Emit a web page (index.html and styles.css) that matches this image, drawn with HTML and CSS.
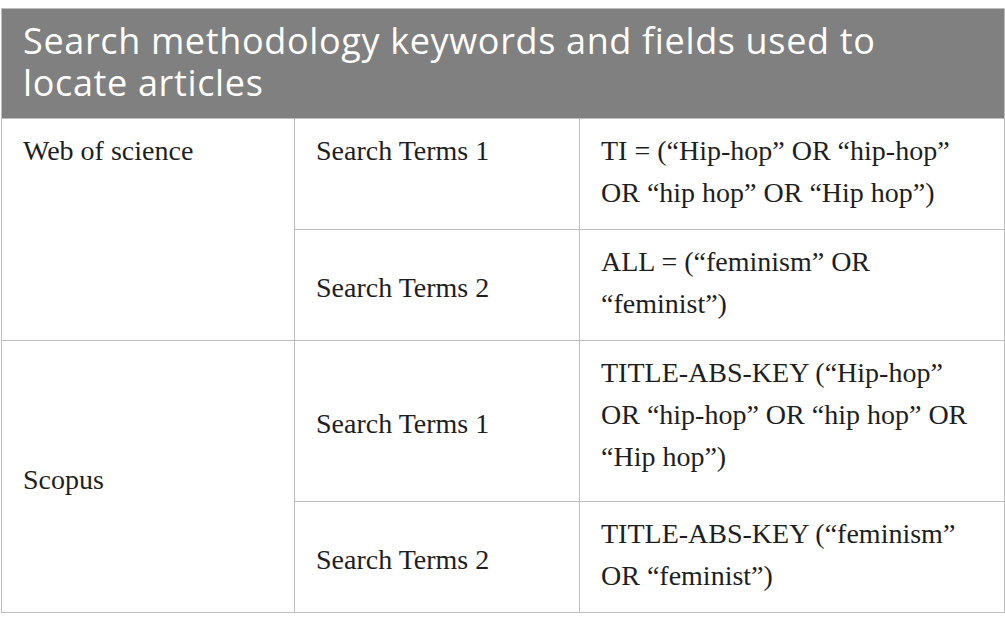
FILE: index.html
```html
<!DOCTYPE html>
<html lang="en">
<head>
<meta charset="utf-8">
<title>Search methodology</title>
<link rel="stylesheet" href="styles.css">
</head>
<body>
<table class="tbl">
  <caption class="cap">Search methodology keywords and fields used to locate articles</caption>
  <colgroup>
    <col class="c1">
    <col class="c2">
    <col class="c3">
  </colgroup>
  <tbody>
    <tr>
      <td rowspan="2" class="top">Web of science</td>
      <td class="top">Search Terms 1</td>
      <td class="q">TI = (“Hip-hop” OR “hip-hop” OR “hip hop” OR “Hip hop”)</td>
    </tr>
    <tr>
      <td>Search Terms 2</td>
      <td class="q">ALL = (“feminism” OR “feminist”)</td>
    </tr>
    <tr>
      <td rowspan="2">Scopus</td>
      <td>Search Terms 1</td>
      <td class="q extra">TITLE-ABS-KEY (“Hip-hop” OR “hip-hop” OR “hip hop” OR “Hip hop”)</td>
    </tr>
    <tr>
      <td>Search Terms 2</td>
      <td class="q">TITLE-ABS-KEY (“feminism” OR “feminist”)</td>
    </tr>
  </tbody>
</table>
</body>
</html>
```

FILE: styles.css
```css
html, body {
  background: #ffffff;
}
body {
  margin: 8px 0 0 1px;
}
.tbl {
  width: 1003px;
  border-collapse: collapse;
  table-layout: fixed;
  font-family: "Liberation Serif", "Times New Roman", serif;
  font-size: 28px;
  line-height: 42px;
  color: #1e1e1e;
  border: 1px solid #bdbdbd;
}
.cap {
  caption-side: top;
  text-align: left;
  background: #808080;
  color: #ffffff;
  font-family: "Open Sans", "DejaVu Sans", sans-serif;
  font-size: 36px;
  letter-spacing: 0.65px;
  line-height: 42px;
  padding: 11px 22px 14px 21px;
  border: 1px solid #bdbdbd;
  border-bottom: none;
}
.c1 { width: 293px; }
.c2 { width: 285px; }
.c3 { width: 425px; }
.tbl td {
  border: 1px solid #bdbdbd;
  padding: 16px 20px 10px 21px;
  vertical-align: middle;
}
.tbl td.top,
.tbl td.q {
  padding-top: 11px;
  padding-bottom: 15px;
}
.tbl td.top {
  vertical-align: top;
}
.tbl td.extra {
  padding-bottom: 23px;
}
```
